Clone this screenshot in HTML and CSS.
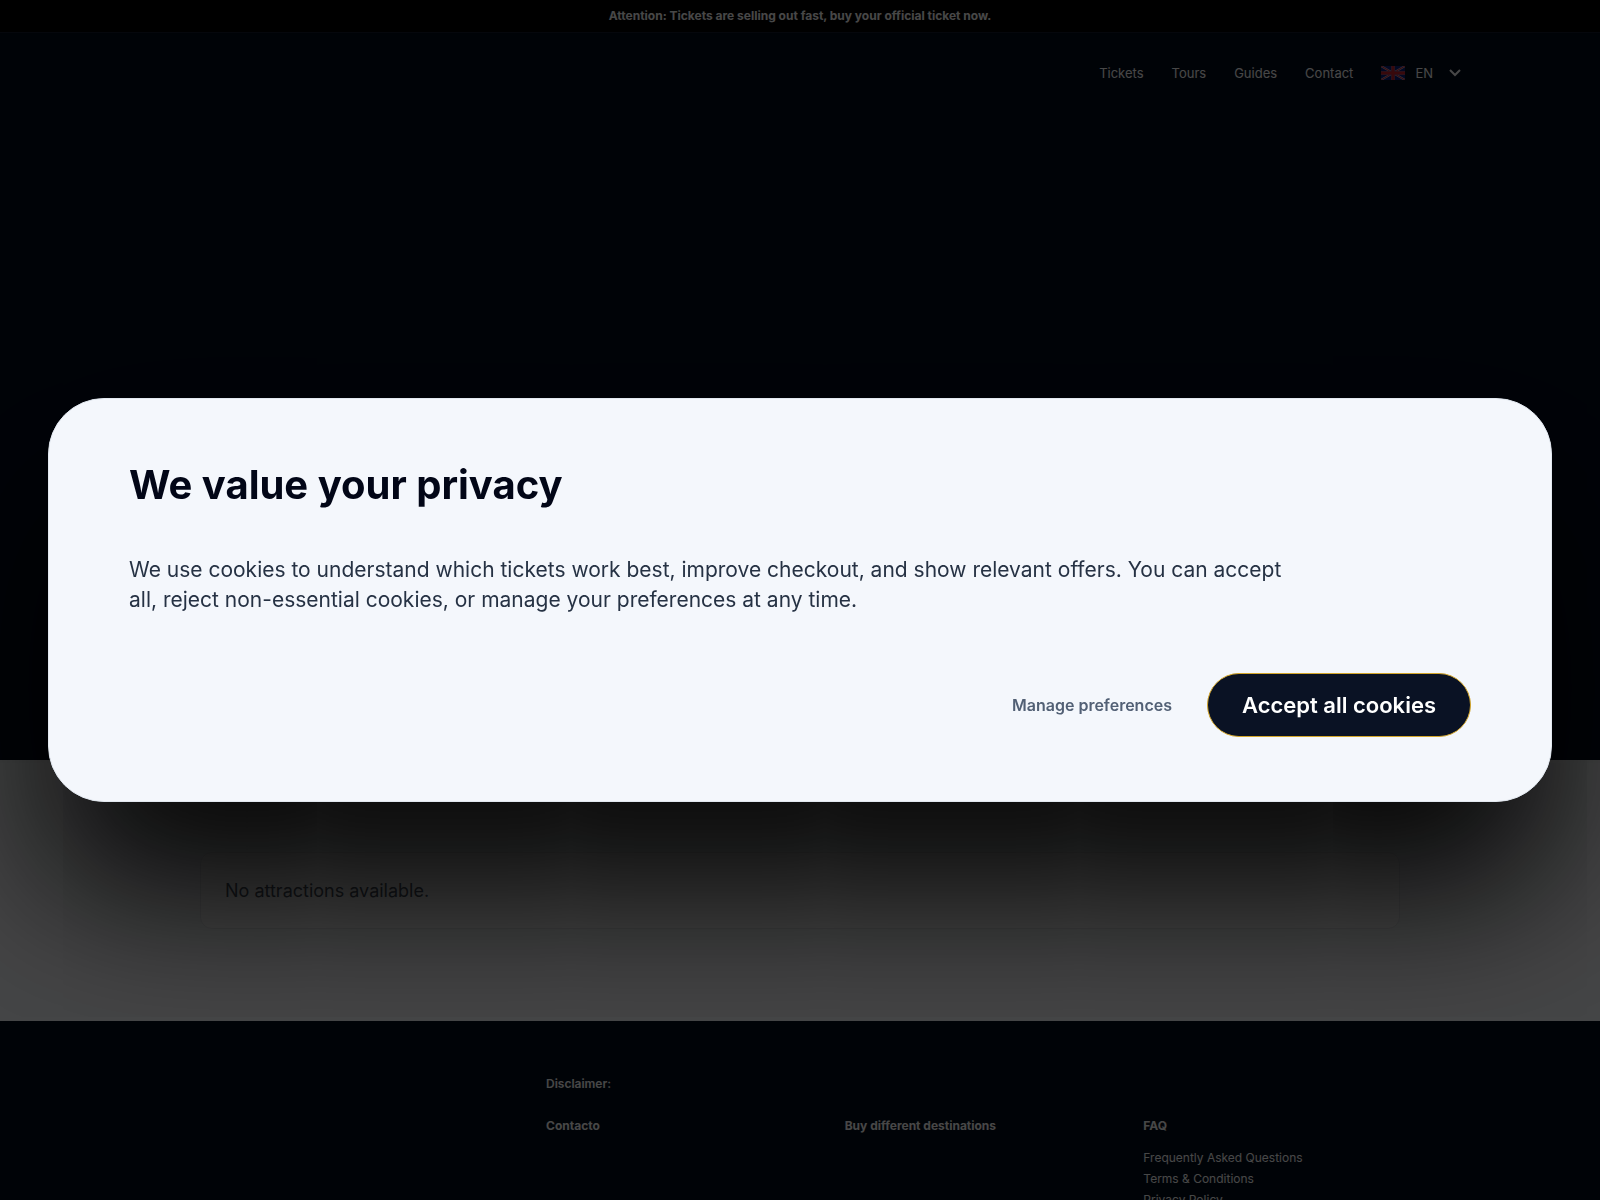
FILE: index.html
```html
<!DOCTYPE html>
<html lang="en">
<head>
<meta charset="utf-8">
<meta name="viewport" content="width=device-width, initial-scale=1">
<title>Official tickets</title>
<link rel="stylesheet" href="styles.css">
</head>
<body>
<p class="notice">Attention: Tickets are selling out fast, buy your official ticket now.</p>
<header class="hero">
  <nav class="nav" aria-label="Main">
    <a href="#tickets">Tickets</a>
    <a href="#tours">Tours</a>
    <a href="#guides">Guides</a>
    <a href="#contact">Contact</a>
    <button class="language" type="button" aria-haspopup="listbox">
      <svg class="flag" viewBox="0 0 24 14" aria-hidden="true">
        <path fill="#0a1f7c" d="M0 0h24v14H0z"/>
        <path stroke="#b9a9c0" stroke-width="2" d="M0 0l24 14M24 0L0 14"/>
        <path stroke="#c8202e" stroke-width="1" d="M0 0l24 14M24 0L0 14"/>
        <path stroke="#6d5a90" stroke-width="4" d="M12 0v14M0 7h24"/>
        <path stroke="#c8202e" stroke-width="3" d="M12 0v14M0 7h24"/>
      </svg>
      <span>EN</span>
      <svg class="chevron" viewBox="0 0 12 8" aria-hidden="true"><path d="M1 1l5 5 5-5" fill="none" stroke="currentColor" stroke-width="2"/></svg>
    </button>
  </nav>
</header>
<main class="attractions">
  <p class="empty">No attractions available.</p>
</main>
<footer class="footer">
  <div class="footer-grid">
    <h2 class="disclaimer">Disclaimer:</h2>
    <h2 class="contact">Contacto</h2>
    <h2>Buy different destinations</h2>
    <section>
      <h2>FAQ</h2>
      <ul>
        <li><a href="#faq">Frequently Asked Questions</a></li>
        <li><a href="#terms">Terms &amp; Conditions</a></li>
        <li><a href="#privacy">Privacy Policy</a></li>
      </ul>
    </section>
  </div>
</footer>
<div class="overlay">
  <div class="dialog" role="dialog" aria-modal="true" aria-labelledby="consent-title">
    <h1 id="consent-title">We value your privacy</h1>
    <p>We use cookies to understand which tickets work best, improve checkout, and show relevant offers. You can accept all, reject non-essential cookies, or manage your preferences at any time.</p>
    <div class="actions">
      <button class="manage" type="button">Manage preferences</button>
      <button class="accept" type="button">Accept all cookies</button>
    </div>
  </div>
</div>
</body>
</html>
```
FILE: styles.css
```css
* { box-sizing: border-box; }

body {
  margin: 0;
  height: 100vh;
  overflow: hidden;
  background: #020b1c;
  color: #fff;
  font-family: Inter, "Liberation Sans", sans-serif;
  font-size: 13px;
}

h1, h2, p, ul { margin: 0; }
a { color: inherit; text-decoration: none; }

button {
  padding: 0;
  border: 0;
  background: none;
  color: inherit;
  font: inherit;
  cursor: pointer;
}

.notice {
  padding: 8px 16px;
  border-bottom: 1px solid #121c2c;
  background: #000;
  font-size: 12px;
  font-weight: 700;
  line-height: 16px;
  text-align: center;
}

.hero { min-height: 727px; }

.nav {
  display: flex;
  align-items: center;
  justify-content: flex-end;
  gap: 28px;
  max-width: 1328px;
  margin: 0 auto;
  padding: 30px 3px;
  line-height: 20px;
}

.language {
  display: flex;
  align-items: center;
  gap: 10px;
}

.flag { width: 24px; height: 14px; }
.chevron { width: 12px; height: 8px; margin-left: 6px; }

.attractions {
  padding: 92px 24px;
  background: #f5f7fa;
}

.empty {
  max-width: 1200px;
  margin: 0 auto;
  padding: 24px;
  border: 1px solid #e5e7eb;
  border-radius: 12px;
  background: #fff;
  color: #4b5563;
  font-size: 18px;
  line-height: 27px;
}

.footer { padding: 53px 24px; }

.footer-grid {
  display: grid;
  grid-template-columns: 304px repeat(3, 1fr);
  gap: 22px 42px;
  max-width: 1200px;
  margin: 0 auto;
  font-size: 12px;
}

.footer h2 {
  font-size: 12px;
  font-weight: 700;
  line-height: 20px;
}

.footer .disclaimer {
  grid-column: 2 / -1;
  font-weight: 600;
}

.contact { grid-column: 2; }

.footer ul {
  padding: 0;
  margin-top: 11px;
  list-style: none;
  line-height: 21px;
}

.overlay {
  position: fixed;
  inset: 0;
  display: flex;
  align-items: center;
  justify-content: center;
  padding: 48px;
  background: rgba(0, 0, 0, .72);
}

.dialog {
  width: 100%;
  padding: 60px 80px 64px;
  border: 1px solid #e2e8f0;
  border-radius: 56px;
  background: #f4f7fc;
  box-shadow: 0 88px 160px rgba(0, 0, 0, .95);
}

.dialog h1 {
  color: #020617;
  font-size: 40px;
  font-weight: 700;
  line-height: 52px;
}

.dialog p {
  max-width: 1180px;
  margin-top: 44px;
  color: #263244;
  font-size: 21px;
  line-height: 30px;
}

.actions {
  display: flex;
  align-items: center;
  justify-content: flex-end;
  gap: 35px;
  margin-top: 58px;
}

.manage {
  color: #526075;
  font-size: 16px;
  font-weight: 600;
}

.accept {
  height: 64px;
  padding: 0 34px;
  border: 1px solid #d4a62a;
  border-radius: 32px;
  background: #0a1224;
  color: #fff;
  font-size: 22px;
  font-weight: 600;
}
```
